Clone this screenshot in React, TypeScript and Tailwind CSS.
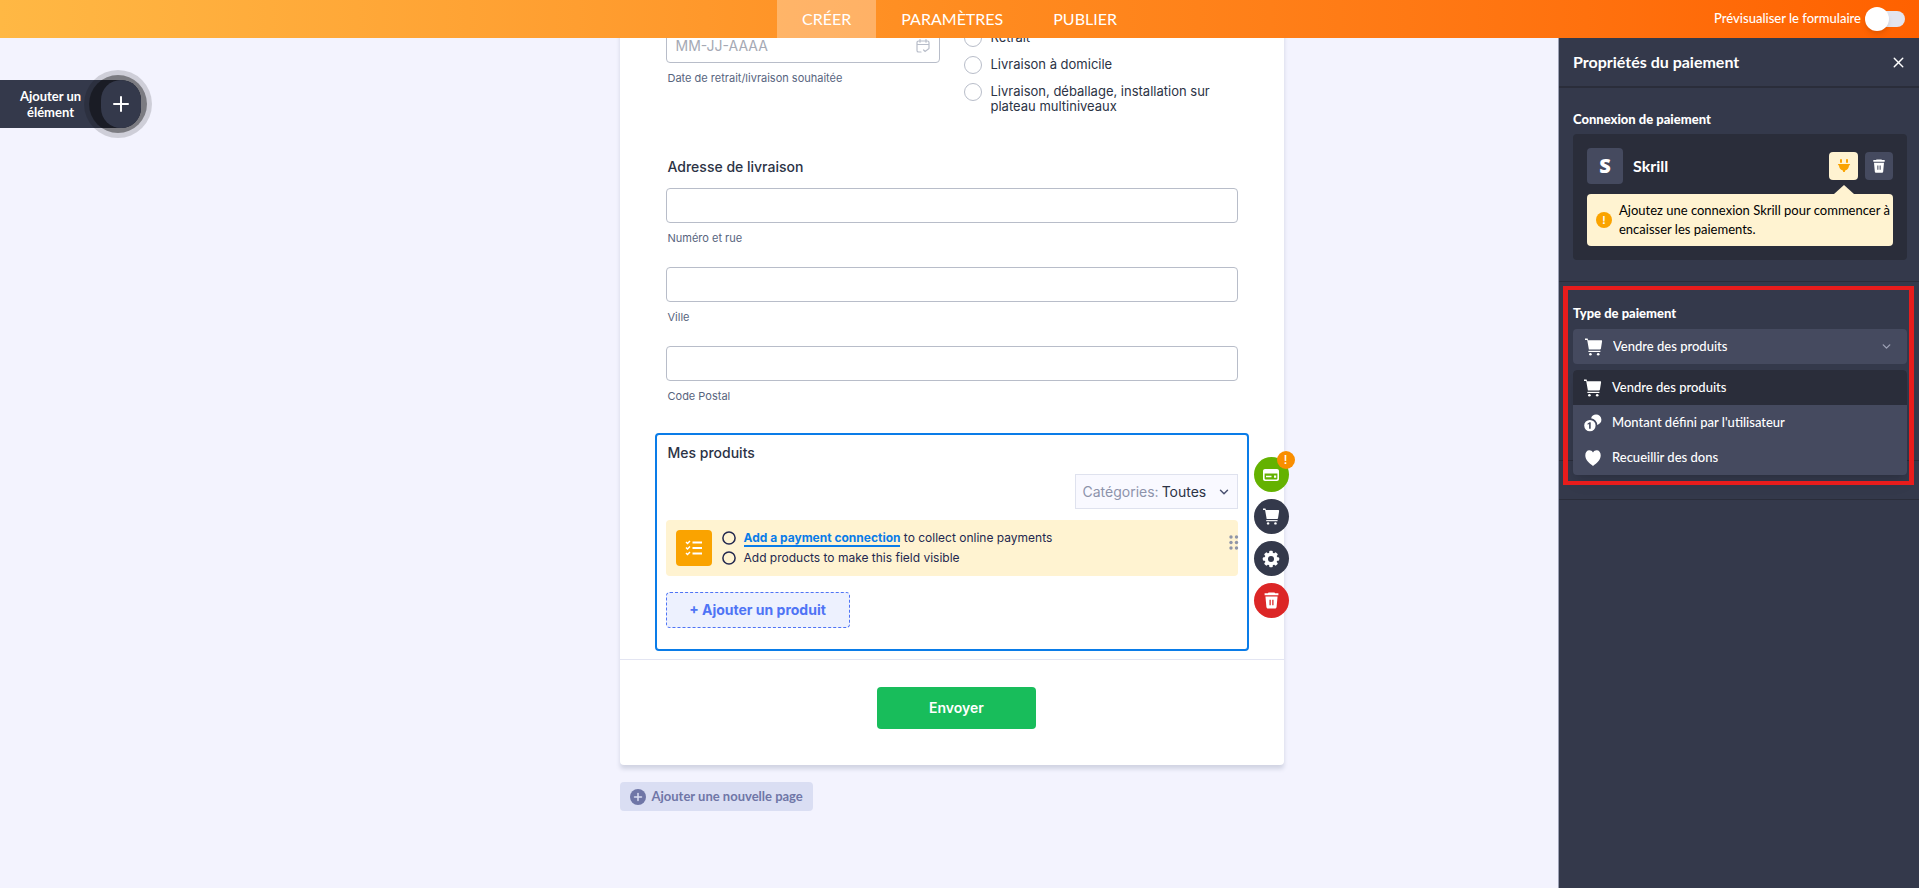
import React, { useState } from 'react';
import { ChevronDown, Plus, X } from 'lucide-react';

const CartIcon = ({ size = 18 }: { size?: number }) => (
    <svg width={size} height={size} viewBox="0 0 18 18" fill="currentColor" aria-hidden="true">
        <path d="M0 0.6h2.6l0.5 1.6h13.2c0.5 0 0.9 0.5 0.8 1l-1.2 7.6c-0.1 0.5-0.5 0.8-0.9 0.8H3.9L2.2 2.1H0z" />
        <rect x="3.4" y="12.8" width="12" height="1.2" />
        <circle cx="5.4" cy="16.3" r="1.3" />
        <circle cx="13.2" cy="16.3" r="1.3" />
    </svg>
);

const CoinsIcon = () => (
    <svg width="18" height="18" viewBox="0 0 18 18" fill="currentColor" aria-hidden="true">
        <path d="M12 0.6a5.2 5.2 0 0 1 1.2 10.3A6.7 6.7 0 0 0 7.1 4.3 5.2 5.2 0 0 1 12 0.6z" />
        <path
            fillRule="evenodd"
            d="M5.9 5.9a5.7 5.7 0 1 1 0 11.4 5.7 5.7 0 0 1 0-11.4zM5.6 8.3 3.6 9.5v1.3l1.5-0.7v4.7h1.6V8.3z"
        />
    </svg>
);

const HeartIcon = () => (
    <svg width="18" height="18" viewBox="0 0 18 18" fill="currentColor" aria-hidden="true">
        <path d="M9 17C5 14.2 1.300 10.800 1.300 6.300 1.300 3.300 3 1.200 5.300 1.200c1.600 0 2.900 0.800 3.700 2.200 0.800-1.400 2.100-2.200 3.700-2.200C15 1.200 16.700 3.300 16.700 6.300 16.700 10.800 13 14.200 9 17z" />
    </svg>
);

const TrashIcon = ({ size = 16 }: { size?: number }) => (
    <svg width={size} height={size} viewBox="0 0 16 16" fill="currentColor" aria-hidden="true">
        <path d="M5.200 0.500h5.600l0.600 0.700h3.100v1.900h-13V1.200h3.100z" />
        <path
            fillRule="evenodd"
            d="M2.300 4.200h11.400l-0.900 10c-0.100 0.800-0.700 1.400-1.500 1.400H4.700c-0.800 0-1.400-0.600-1.500-1.400zM6.100 7.400v5h1.200v-5zM8.700 7.400v5h1.200v-5z"
        />
    </svg>
);

const GearIcon = () => (
    <svg width="18" height="18" viewBox="0 0 18 18" aria-hidden="true">
        <g fill="currentColor">
            <circle cx="9" cy="9" r="6.500" />
            <rect x="7.200" y="0.800" width="3.600" height="16.400" rx="1" />
            <rect x="7.200" y="0.800" width="3.600" height="16.400" rx="1" transform="rotate(45 9 9)" />
            <rect x="7.200" y="0.800" width="3.600" height="16.400" rx="1" transform="rotate(90 9 9)" />
            <rect x="7.200" y="0.800" width="3.600" height="16.400" rx="1" transform="rotate(135 9 9)" />
        </g>
        <circle cx="9" cy="9" r="3" fill="#34394b" />
    </svg>
);

const CardIcon = () => (
    <svg width="18" height="18" viewBox="0 0 18 18" aria-hidden="true">
        <path
            fill="currentColor"
            fillRule="evenodd"
            d="M3 3h12c1.100 0 2 0.900 2 2v8c0 1.100-0.900 2-2 2H3c-1.100 0-2-0.900-2-2V5c0-1.100 0.900-2 2-2zM2.600 7.400v5.200c0 0.500 0.300 0.800 0.800 0.800h11.200c0.500 0 0.800-0.300 0.800-0.800V7.400z"
        />
        <path fill="currentColor" d="M4 9.800h5.500v1.500H4zM12 9.500h2.200v2.200H12z" />
    </svg>
);

const PlugIcon = () => (
    <svg width="14" height="16" viewBox="0 0 14 16" fill="currentColor" aria-hidden="true">
        <rect x="3" y="1" width="2" height="4" rx="1" />
        <rect x="9" y="1" width="2" height="4" rx="1" />
        <path d="M2 6h10c0.800 0 1.200 0.500 1.100 1.200H12c0 2.700-1.300 4.600-3.600 5.100L7.700 14H6.300l-0.700-1.700C3.300 11.800 2 9.900 2 7.200H0.900C0.800 6.500 1.200 6 2 6z" />
    </svg>
);

const DateIcon = () => (
    <svg
        width="14"
        height="14"
        viewBox="0 0 14 14"
        fill="none"
        stroke="currentColor"
        strokeWidth="1.200"
        strokeLinecap="round"
        aria-hidden="true"
    >
        <path d="M5 13H2.600C1.700 13 1 12.300 1 11.400V3.600C1 2.700 1.700 2 2.600 2h8.800C12.300 2 13 2.700 13 3.600V9M1 5.500h12M4 0.600v2.600M10 0.600v2.600M7.600 11l1.500 1.500L13 9.600" />
    </svg>
);

const ChecklistIcon = () => (
    <svg width="18" height="18" viewBox="0 0 18 18" fill="none" stroke="currentColor" strokeWidth="1.800" aria-hidden="true">
        <path d="M7.500 3.500H17M7.500 9H17M7.500 14.500H17" />
        <path strokeWidth="1.500" d="M1 3l1.500 1.500L5 2M1 8.500L2.500 10 5 7.500M1 14l1.500 1.500L5 13" />
    </svg>
);

const TodoCircle = () => (
    <svg width="14" height="14" viewBox="0 0 14 14" fill="none" stroke="currentColor" strokeWidth="1.500" aria-hidden="true">
        <circle cx="7" cy="7" r="6.100" />
    </svg>
);

const DragDots = () => (
    <svg width="10" height="15" viewBox="0 0 10 15" fill="currentColor" aria-hidden="true">
        {[2, 7.5, 13].map((y) => (
            <g key={y}>
                <circle cx="2" cy={y} r="1.700" />
                <circle cx="7.500" cy={y} r="1.700" />
            </g>
        ))}
    </svg>
);

const tabs = ['CRÉER', 'PARAMÈTRES', 'PUBLIER'];

const addressFields = [
    { id: 'street', label: 'Numéro et rue' },
    { id: 'city', label: 'Ville' },
    { id: 'zip', label: 'Code Postal' },
];

const deliveryOptions = ['Retrait', 'Livraison à domicile', 'Livraison, déballage, installation sur plateau multiniveaux'];

const paymentTypes = [
    { label: 'Vendre des produits', icon: <CartIcon /> },
    { label: "Montant défini par l'utilisateur", icon: <CoinsIcon /> },
    { label: 'Recueillir des dons', icon: <HeartIcon /> },
];

const Header = () => {
    const [preview, setPreview] = useState(false);

    return (
        <header className="relative z-20 flex h-[38px] items-center justify-between bg-linear-to-r from-[#ffb844] via-[#ff8c20] to-[#ff6100] text-white">
            <div className="flex-1 pl-[14px]" />
            <nav className="flex h-full text-base leading-5">
                {tabs.map((tab, i) => (
                    <a key={tab} href="#" className={`flex items-center px-[25px] ${i === 0 ? 'bg-white/30' : ''}`}>
                        {tab}
                    </a>
                ))}
            </nav>
            <label className="flex flex-1 items-center justify-end gap-1 pr-[14px] text-[13px] font-medium">
                Prévisualiser le formulaire
                <span className="relative flex h-6 w-10 items-center">
                    <input
                        type="checkbox"
                        checked={preview}
                        onChange={(e) => setPreview(e.target.checked)}
                        className="peer ml-1 h-4 w-full appearance-none rounded-full bg-[#e3e5ef]"
                    />
                    <span className="pointer-events-none absolute left-0 size-6 rounded-full bg-white shadow-md peer-checked:left-4" />
                </span>
            </label>
        </header>
    );
};

const AddElement = () => (
    <aside className="w-[345px] shrink-0 pt-[42px]">
        <button className="relative flex h-12 w-[141px] items-center rounded-r-[20px] bg-[#34394b] text-white">
            <span className="w-[101px] px-4 text-center text-[13px] leading-4 font-bold">Ajouter un élément</span>
            <span className="absolute top-1/2 left-[84px] flex size-[68px] -translate-y-1/2 items-center justify-center rounded-full bg-black/15">
                <span className="size-[58px] rounded-full bg-black/40" />
            </span>
            <span className="relative flex h-12 w-10 items-center justify-center rounded-[20px] bg-[#34394b]">
                <Plus size={24} strokeWidth={2} />
            </span>
        </button>
    </aside>
);

const ProductField = () => (
    <section className="relative -mx-[11px] mt-[29px] mb-2 rounded-sm border-2 border-[#0a7ce8] px-[9px] pt-2 pb-[21px]">
        <h2 className="px-0.5 text-sm leading-5 font-medium">Mes produits</h2>

        <div className="mt-[11px] flex justify-end">
            <div className="relative flex h-[35px] w-[163px] items-center border border-[#dfe2ee] bg-[#f9f9ff] pl-[7px] text-sm">
                <label htmlFor="category" className="text-[#8d93ab]">
                    Catégories:
                </label>
                <select id="category" className="h-full flex-1 appearance-none pl-[3px] outline-none">
                    <option>Toutes</option>
                </select>
                <ChevronDown size={14} strokeWidth={2.5} className="pointer-events-none absolute right-[6px] text-[#4a5170]" />
            </div>
        </div>

        <div className="mt-[11px] flex h-14 items-center rounded-sm bg-[#fff3d1] pl-[10px] text-[#23284f]">
            <span className="flex size-9 items-center justify-center rounded-sm bg-[#faa300] text-white">
                <ChecklistIcon />
            </span>
            <ul className="ml-[10px] flex-1 text-[12px] leading-5">
                <li className="flex items-center gap-2">
                    <TodoCircle />
                    <span>
                        <a href="#" className="border-b-2 border-[#0a7ce8] font-bold text-[#0a7ce8]">
                            Add a payment connection
                        </a>{' '}
                        to collect online payments
                    </span>
                </li>
                <li className="flex items-center gap-2">
                    <TodoCircle />
                    Add products to make this field visible
                </li>
            </ul>
            <span className="-mr-px mb-3 text-[#8f95a9]">
                <DragDots />
            </span>
        </div>

        <button className="mt-4 flex h-9 w-[184px] items-center justify-center rounded-sm border border-dashed border-[#4f74f5] bg-[#edf1fe] text-sm font-bold text-[#4f74f5]">
            + Ajouter un produit
        </button>

        <div className="absolute top-[22px] left-full ml-[7px] flex flex-col gap-[7px] text-white">
            <button aria-label="Connexion" className="relative flex size-[35px] items-center justify-center rounded-full bg-[#64b200]">
                <CardIcon />
                <span className="absolute -top-[6px] -right-[6px] flex size-[18px] items-center justify-center rounded-full bg-[#f98e00] text-xs font-medium">
                    !
                </span>
            </button>
            <button aria-label="Produits" className="flex size-[35px] items-center justify-center rounded-full bg-[#34394b]">
                <CartIcon size={17} />
            </button>
            <button aria-label="Propriétés" className="flex size-[35px] items-center justify-center rounded-full bg-[#34394b]">
                <GearIcon />
            </button>
            <button aria-label="Supprimer" className="flex size-[35px] items-center justify-center rounded-full bg-[#dc2626]">
                <TrashIcon size={17} />
            </button>
        </div>
    </section>
);

const FormBuilder = () => (
    <main className="flex flex-1 justify-center font-[Inter,sans-serif] text-[#2c3345]">
        <div className="-mt-3 w-[664px]">
            <form className="rounded-sm bg-white shadow-[0_4px_4px_rgba(87,100,126,0.21)]" onSubmit={(e) => e.preventDefault()}>
                <div className="px-[46px] pt-0.5">
                    <div className="flex gap-6">
                        <div className="w-[274px]">
                            <div className="relative flex items-center">
                                <input
                                    id="date"
                                    type="text"
                                    placeholder="MM-JJ-AAAA"
                                    className="h-[35px] w-full rounded-sm border border-[#b8bdc9] px-[9px] text-sm placeholder:text-[#a5a9b4]"
                                />
                                <span className="absolute right-[10px] text-[#b8bdc9]">
                                    <DateIcon />
                                </span>
                            </div>
                            <label htmlFor="date" className="mt-[7px] block px-0.5 text-[11px] leading-4 text-[#57647e]">
                                Date de retrait/livraison souhaitée
                            </label>
                        </div>
                        <div className="flex flex-1 flex-col gap-[9px] pt-px text-[13px] leading-[15px]">
                            {deliveryOptions.map((option) => (
                                <label key={option} className="flex items-start gap-[9px]">
                                    <input
                                        type="radio"
                                        name="delivery"
                                        className="size-[18px] shrink-0 appearance-none rounded-full border border-[#b8bdc9] checked:border-4"
                                    />
                                    <span className="pt-px">{option}</span>
                                </label>
                            ))}
                        </div>
                    </div>

                    <h2 className="mt-[43px] px-0.5 text-sm leading-5 font-medium">Adresse de livraison</h2>
                    <div className="mt-[11px] flex flex-col gap-[21px]">
                        {addressFields.map((field) => (
                            <div key={field.id}>
                                <input id={field.id} type="text" className="block h-[35px] w-full rounded-sm border border-[#b8bdc9] px-2" />
                                <label htmlFor={field.id} className="mt-[7px] block px-0.5 text-[11px] leading-4 text-[#57647e]">
                                    {field.label}
                                </label>
                            </div>
                        ))}
                    </div>

                    <ProductField />
                </div>

                <div className="flex justify-center border-t border-[#e3e5f2] pt-[27px] pb-9 pl-[10px]">
                    <button type="submit" className="h-[42px] w-[159px] rounded-sm bg-[#18bd5b] text-sm font-semibold text-white">
                        Envoyer
                    </button>
                </div>
            </form>

            <button className="mt-[17px] flex h-[29px] items-center gap-[6px] rounded-sm bg-[#dadef3] px-[10px] font-[Lato,sans-serif] text-[13px] font-bold text-[#6f76a7]">
                <span className="flex size-4 items-center justify-center rounded-full bg-[#6f76a7] text-[#dadef3]">
                    <Plus size={12} strokeWidth={3} />
                </span>
                Ajouter une nouvelle page
            </button>
        </div>
    </main>
);

const PaymentPanel = () => {
    const [type, setType] = useState(paymentTypes[0].label);

    return (
        <aside className="w-[361px] shrink-0 border-l border-[#9da1b5] bg-[#34394b] text-white">
            <div className="flex h-[50px] items-center justify-between border-b-2 border-[#2a2d3a] pr-3 pl-[14px]">
                <h1 className="text-base font-bold">Propriétés du paiement</h1>
                <button aria-label="Fermer">
                    <X size={17} strokeWidth={2} />
                </button>
            </div>

            <section className="border-b border-[#2a2d3a] pt-[21px] pr-3 pb-[21px] pl-[14px]">
                <h2 className="text-[13px] leading-5 font-black">Connexion de paiement</h2>
                <div className="mt-[5px] rounded-sm bg-[#2a2d3a] p-[14px]">
                    <div className="flex items-center">
                        <span className="flex size-9 items-center justify-center rounded-sm bg-[#454a5f] font-[Open_Sans,sans-serif] text-xl font-extrabold">
                            S
                        </span>
                        <span className="ml-[10px] flex-1 text-base font-bold">Skrill</span>
                        <button
                            aria-label="Connecter"
                            className="relative flex h-7 w-[29px] items-center justify-center rounded-sm bg-[#fff3d1] text-[#faa300]"
                        >
                            <PlugIcon />
                            <span className="absolute top-[33px] border-x-10 border-b-9 border-x-transparent border-b-[#fff3d1]" />
                        </button>
                        <button
                            aria-label="Supprimer la connexion"
                            className="ml-[7px] flex size-7 items-center justify-center rounded-sm bg-[#454a5f]"
                        >
                            <TrashIcon size={14} />
                        </button>
                    </div>
                    <div className="mt-[10px] flex items-center gap-[7px] rounded-sm bg-[#fff3d1] py-[7px] pl-[9px] text-[13px] leading-[19px] text-black">
                        <span className="flex size-4 shrink-0 items-center justify-center rounded-full bg-[#faa300] text-xs font-bold text-white">
                            !
                        </span>
                        <p>Ajoutez une connexion Skrill pour commencer à encaisser les paiements.</p>
                    </div>
                </div>
            </section>

            <section className="relative h-[179px] border-b border-[#2a2d3a] pt-[21px] pr-3 pl-[14px]">
                <div className="pointer-events-none absolute top-1 right-[5px] left-1 z-10 h-[199px] border-x-5 border-y-4 border-[#e81c1c]" />
                <label htmlFor="payment-type" className="block text-[13px] leading-5 font-black">
                    Type de paiement
                </label>
                <div className="relative mt-[6px] flex items-center">
                    <span className="pointer-events-none absolute left-3">
                        <CartIcon />
                    </span>
                    <select
                        id="payment-type"
                        value={type}
                        onChange={(e) => setType(e.target.value)}
                        className="h-[35px] w-full appearance-none rounded-sm bg-[#454a5f] pl-10 text-[13px] font-medium outline-none"
                    >
                        {paymentTypes.map((item) => (
                            <option key={item.label}>{item.label}</option>
                        ))}
                    </select>
                    <ChevronDown size={13} strokeWidth={2.5} className="pointer-events-none absolute right-[14px] text-[#9da1b5]" />
                    <ul className="absolute top-[41px] right-0 left-0 overflow-hidden rounded-sm bg-[#454a5f] shadow-lg">
                        {paymentTypes.map((item) => (
                            <li key={item.label}>
                                <button
                                    onClick={() => setType(item.label)}
                                    className={`flex h-[35px] w-full items-center gap-[10px] px-[11px] text-[13px] font-medium ${item.label === type ? 'bg-[#2a2d3a]' : ''}`}
                                >
                                    {item.icon}
                                    {item.label}
                                </button>
                            </li>
                        ))}
                    </ul>
                </div>
            </section>
            <div className="h-[39px] border-b border-[#2a2d3a]" />
        </aside>
    );
};

export default function App() {
    return (
        <div className="flex min-h-screen flex-col overflow-hidden bg-[#f3f3fe] font-[Lato,sans-serif]">
            <Header />
            <div className="flex flex-1">
                <AddElement />
                <FormBuilder />
                <PaymentPanel />
            </div>
        </div>
    );
}
